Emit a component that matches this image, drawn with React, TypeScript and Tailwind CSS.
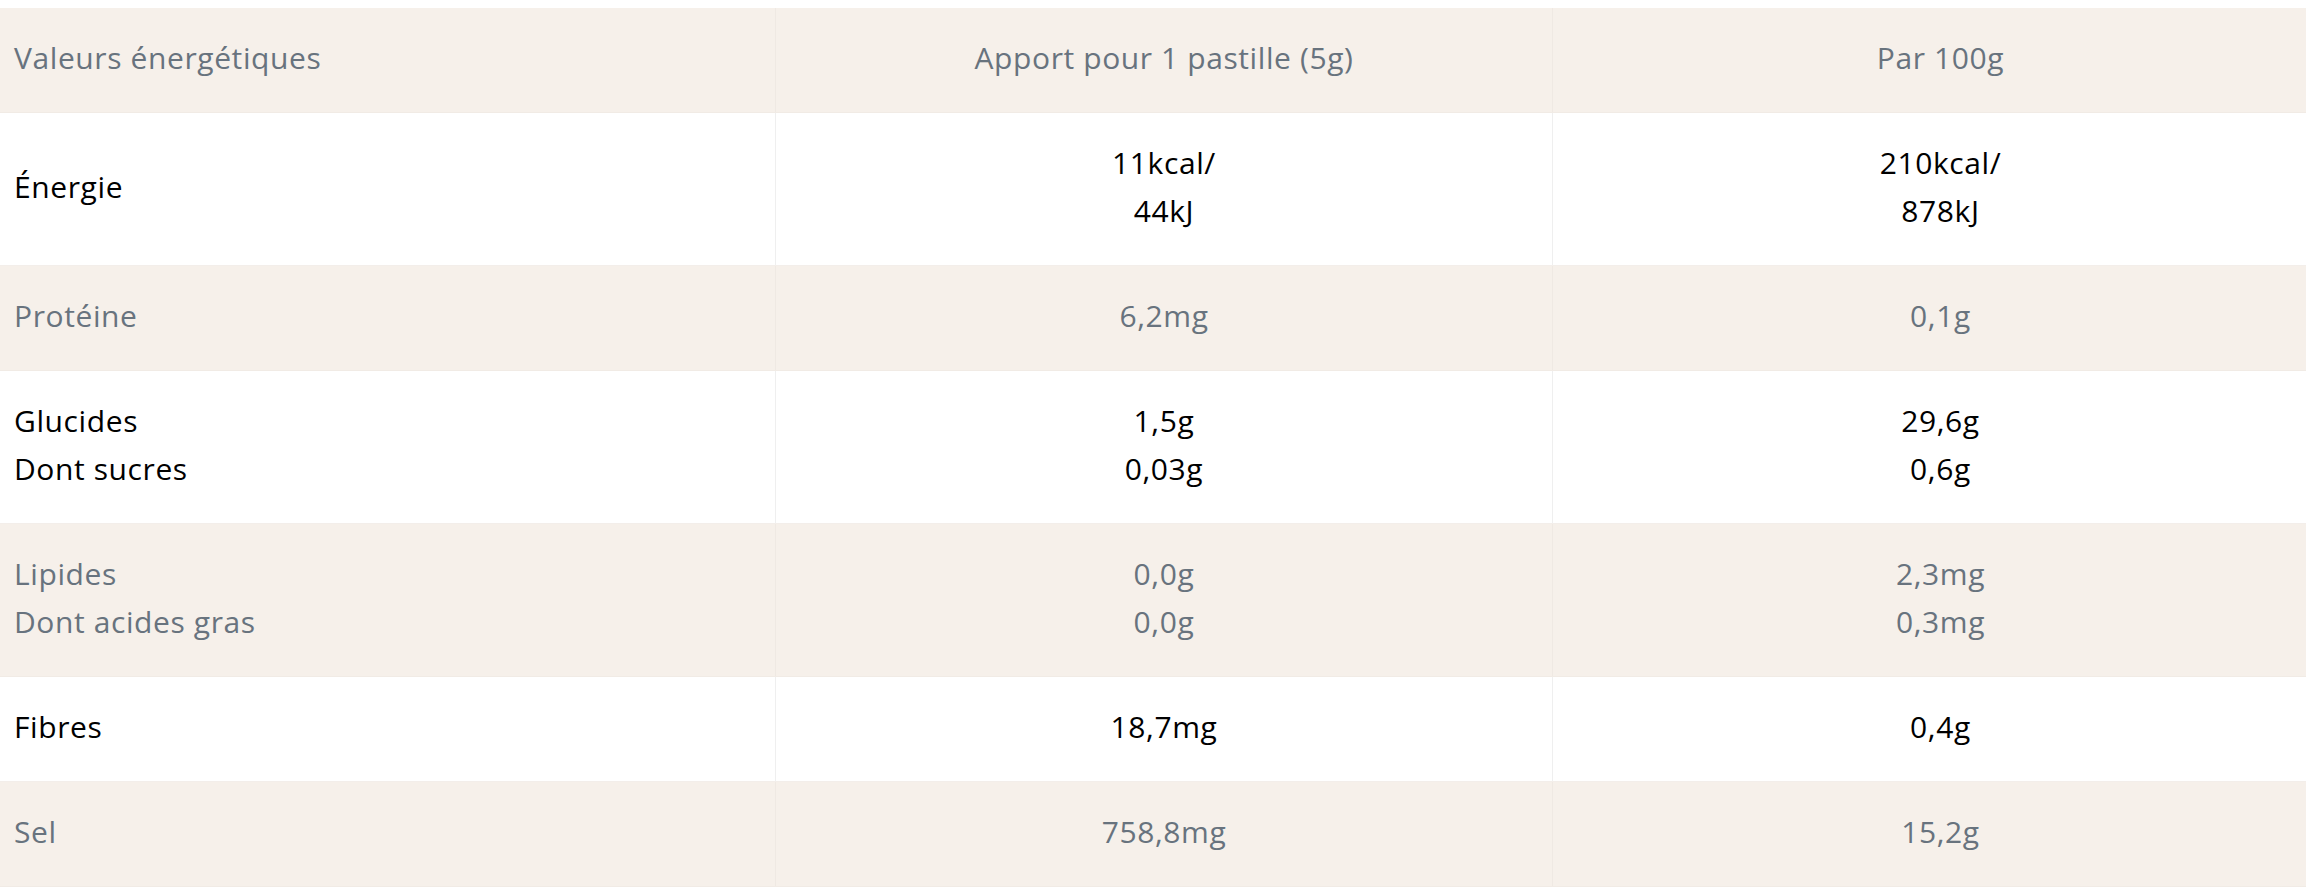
const rows = [
  { label: ["Valeurs énergétiques"], a: ["Apport pour 1 pastille (5g)"], b: ["Par 100g"] },
  { label: ["Énergie"], a: ["11kcal/", "44kJ"], b: ["210kcal/", "878kJ"] },
  { label: ["Protéine"], a: ["6,2mg"], b: ["0,1g"] },
  { label: ["Glucides", "Dont sucres"], a: ["1,5g", "0,03g"], b: ["29,6g", "0,6g"] },
  { label: ["Lipides", "Dont acides gras"], a: ["0,0g", "0,0g"], b: ["2,3mg", "0,3mg"] },
  { label: ["Fibres"], a: ["18,7mg"], b: ["0,4g"] },
  { label: ["Sel"], a: ["758,8mg"], b: ["15,2g"] },
];

function Lines({ lines }: { lines: string[] }) {
  return (
    <>
      {lines.map((l, i) => (
        <div key={i}>{l}</div>
      ))}
    </>
  );
}

export default function App() {
  return (
    <div className="w-full overflow-hidden bg-white pt-[8px] font-['Open_Sans','Lato',sans-serif] text-[30px] leading-[48px] tracking-[0.6px]">
      <div className="w-[2328px]">
        {rows.map((r, i) => {
          const shaded = i % 2 === 0;
          return (
            <div
              key={i}
              className={`grid grid-cols-[775px_777px_776px] border-b ${
                shaded
                  ? "bg-[#f6f0ea] text-[#68737e] border-[#f1ebe5]"
                  : "bg-white text-black border-[#f3eeea]"
              }`}
            >
              <div className="flex flex-col justify-center px-[14px] pt-[26px] pb-[30px]">
                <Lines lines={r.label} />
              </div>
              <div
                className={`flex flex-col items-center justify-center pt-[26px] pb-[30px] border-l ${
                  shaded ? "border-[#efe9e3]" : "border-[#efefef]"
                }`}
              >
                <Lines lines={r.a} />
              </div>
              <div
                className={`flex flex-col items-center justify-center pt-[26px] pb-[30px] border-l ${
                  shaded ? "border-[#efe9e3]" : "border-[#efefef]"
                }`}
              >
                <Lines lines={r.b} />
              </div>
            </div>
          );
        })}
      </div>
    </div>
  );
}
